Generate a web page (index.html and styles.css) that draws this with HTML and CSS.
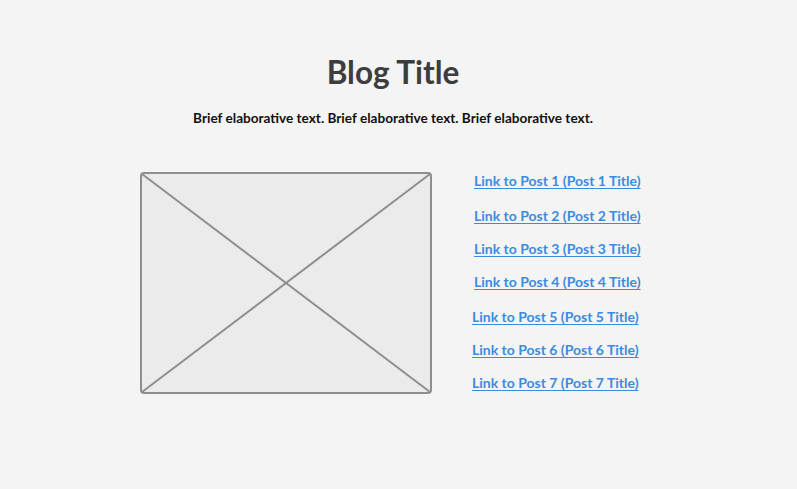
FILE: index.html
```html
<!DOCTYPE html>
<html>
<head>
<meta charset="utf-8">
<link rel="stylesheet" href="styles.css">
</head>
<body>
<main class="page">
  <h1 class="title">Blog Title</h1>
  <p class="lead">Brief elaborative text. Brief elaborative text. Brief elaborative text.</p>
  <section class="content">
    <div class="placeholder">
      <svg class="cross" viewBox="0 0 292 221" preserveAspectRatio="none">
        <line x1="2" y1="2" x2="290" y2="219" />
        <line x1="290" y1="2" x2="2" y2="219" />
      </svg>
    </div>
    <nav class="links">
      <ul class="group group-a">
        <li><a href="#">Link to Post 1 (Post 1 Title)</a></li>
        <li class="wide"><a href="#">Link to Post 2 (Post 2 Title)</a></li>
        <li><a href="#">Link to Post 3 (Post 3 Title)</a></li>
        <li><a href="#">Link to Post 4 (Post 4 Title)</a></li>
      </ul>
      <ul class="group group-b">
        <li><a href="#">Link to Post 5 (Post 5 Title)</a></li>
        <li><a href="#">Link to Post 6 (Post 6 Title)</a></li>
        <li><a href="#">Link to Post 7 (Post 7 Title)</a></li>
      </ul>
    </nav>
  </section>
</main>
</body>
</html>
```

FILE: styles.css
```css
html, body {
  margin: 0;
  padding: 0;
  background: #f4f4f4;
}
body {
  font-family: "Lato", "Open Sans", sans-serif;
  width: 797px;
  height: 489px;
  overflow: hidden;
}
.page {
  display: flex;
  flex-direction: column;
  align-items: center;
  padding-right: 11px;
}
.title {
  margin: 52px 0 0;
  font-size: 31.5px;
  line-height: 40px;
  font-weight: 700;
  color: #3d3d3d;
}
.lead {
  margin: 16px 0 0;
  font-size: 13.6px;
  line-height: 20px;
  font-weight: 700;
  color: #111;
}
.content {
  align-self: stretch;
  display: flex;
  align-items: flex-start;
  margin-top: 44px;
  padding-left: 140px;
}
.placeholder {
  position: relative;
  width: 292px;
  height: 222px;
  box-sizing: border-box;
  border: 2px solid #8e8e8e;
  border-radius: 4px;
  background: #ebebeb;
}
.cross {
  position: absolute;
  inset: -2px;
  width: 292px;
  height: 222px;
}
.cross line {
  stroke: #8e8e8e;
  stroke-width: 2;
}
.links {
  display: flex;
  flex-direction: column;
  margin-left: 40px;
  margin-top: -1px;
}
.group {
  list-style: none;
  margin: 0;
  padding: 0;
  display: flex;
  flex-direction: column;
  gap: 13px;
}
.group li {
  font-size: 14px;
  line-height: 20px;
  font-weight: 700;
}
.group li.wide {
  margin-top: 2px;
}
.group-a {
  margin-left: 2px;
}
.group-b {
  margin-top: 15px;
}
.group a {
  color: #3b8be0;
  text-decoration: underline;
  text-underline-offset: 2px;
}
```
